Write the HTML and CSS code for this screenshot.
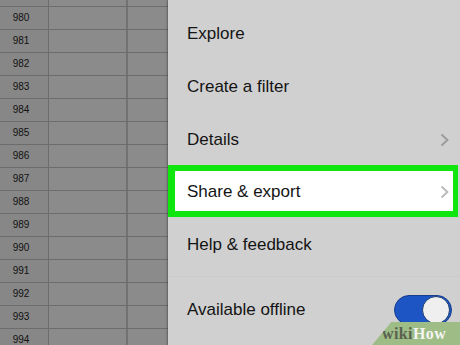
FILE: index.html
```html
<!DOCTYPE html>
<html lang="en">
<head>
  <meta charset="UTF-8" />
  <meta name="viewport" content="width=device-width, initial-scale=1.0"/>
  <title>Sheet menu</title>
  <link rel="stylesheet" href="styles.css">
</head>
<body>
  <div class="screen">
    <div class="sheet">
      <div class="row stub"><div class="num"></div><div class="cell"></div><div class="cell last"></div></div>
      <div class="row"><div class="num">980</div><div class="cell"></div><div class="cell last"></div></div>
      <div class="row"><div class="num">981</div><div class="cell"></div><div class="cell last"></div></div>
      <div class="row"><div class="num">982</div><div class="cell"></div><div class="cell last"></div></div>
      <div class="row"><div class="num">983</div><div class="cell"></div><div class="cell last"></div></div>
      <div class="row"><div class="num">984</div><div class="cell"></div><div class="cell last"></div></div>
      <div class="row"><div class="num">985</div><div class="cell"></div><div class="cell last"></div></div>
      <div class="row"><div class="num">986</div><div class="cell"></div><div class="cell last"></div></div>
      <div class="row"><div class="num">987</div><div class="cell"></div><div class="cell last"></div></div>
      <div class="row"><div class="num">988</div><div class="cell"></div><div class="cell last"></div></div>
      <div class="row"><div class="num">989</div><div class="cell"></div><div class="cell last"></div></div>
      <div class="row"><div class="num">990</div><div class="cell"></div><div class="cell last"></div></div>
      <div class="row"><div class="num">991</div><div class="cell"></div><div class="cell last"></div></div>
      <div class="row"><div class="num">992</div><div class="cell"></div><div class="cell last"></div></div>
      <div class="row"><div class="num">993</div><div class="cell"></div><div class="cell last"></div></div>
      <div class="row"><div class="num">994</div><div class="cell"></div><div class="cell last"></div></div>
    </div>

    <div class="menu">
      <div class="item">Explore</div>
      <div class="item">Create a filter</div>
      <div class="item">
        <span>Details</span>
        <svg class="chevron" width="9" height="14" viewBox="0 0 9 14"><polyline points="1.5,1.5 7.5,7 1.5,12.5" fill="none" stroke="#9a9a9a" stroke-width="1.8"/></svg>
      </div>
      <div class="item highlight">
        <span>Share &amp; export</span>
        <svg class="chevron" width="9" height="14" viewBox="0 0 9 14"><polyline points="1.5,1.5 7.5,7 1.5,12.5" fill="none" stroke="#b8b8b8" stroke-width="1.8"/></svg>
      </div>
      <div class="item">Help &amp; feedback</div>
      <div class="item offline">
        <span>Available offline</span>
        <div class="toggle"><div class="knob"></div></div>
      </div>
    </div>

    <div class="watermark"><span class="wiki">wiki</span><span class="how">How</span></div>
  </div>
</body>
</html>
```

FILE: styles.css
```css
html, body {
  margin: 0;
  padding: 0;
}

body {
  width: 460px;
  height: 345px;
  overflow: hidden;
  font-family: "Liberation Sans", Arial, sans-serif;
}

.screen {
  position: relative;
  display: flex;
  width: 460px;
  height: 345px;
  overflow: hidden;
}

/* spreadsheet behind the menu */
.sheet {
  width: 168px;
  flex-shrink: 0;
  background: #8b8b8b;
}

.row {
  display: grid;
  grid-template-columns: 49px 79px 40px;
  height: 23px;
  box-sizing: border-box;
  border-bottom: 1px solid #6c6c6c;
}

.row.stub {
  height: 7px;
}

.num {
  background: #878787;
  border-right: 1px solid #6c6c6c;
  color: #111;
  font-size: 10px;
  line-height: 22px;
  text-align: center;
  padding-right: 6px;
}

.cell {
  border-right: 2px solid #727272;
}

.cell.last {
  border-right: 1px solid #808080;
}

/* menu panel */
.menu {
  flex: 1;
  background: #d0d0d0;
  padding-top: 7px;
  box-shadow: -1px 0 2px rgba(0, 0, 0, 0.25);
}

.item {
  display: flex;
  align-items: center;
  justify-content: space-between;
  height: 53px;
  padding: 0 11px 0 19px;
  font-size: 17px;
  color: #141414;
}

.chevron {
  display: block;
}

.item.highlight {
  height: 52px;
  box-sizing: border-box;
  margin-top: -1px;
  margin-bottom: 1px;
  margin-right: 2px;
  background: #fff;
  border: 6px solid #0ee60e;
  border-left-width: 7px;
  border-right-width: 5px;
  padding: 2px 4px 0 12px;
}

.item.offline {
  margin-top: 5px;
  padding-top: 7px;
  height: 60px;
  box-sizing: border-box;
  border-top: 1px solid #cbcbcb;
  padding-right: 8px;
}

.toggle {
  width: 58px;
  height: 30px;
  box-sizing: border-box;
  border-radius: 15px;
  background: #1d55c4;
  border: 1px solid #173f8c;
  display: flex;
  justify-content: flex-end;
  align-items: center;
  padding-right: 1px;
}

.knob {
  width: 26px;
  height: 26px;
  border-radius: 50%;
  background: #efefef;
  border: 1px solid #1a3a70;
}

/* watermark overlay */
.watermark {
  position: absolute;
  right: 0;
  bottom: 0;
  width: 88px;
  height: 23px;
  background: #9ebc86;
  clip-path: polygon(22% 0, 100% 0, 100% 100%, 0 100%);
  font-family: "Liberation Serif", "DejaVu Serif", serif;
  font-weight: bold;
  font-size: 16px;
  line-height: 23px;
  padding-left: 10px;
  box-sizing: border-box;
  letter-spacing: 0.4px;
}

.wiki {
  color: #5a6150;
}

.how {
  color: #f4f4f0;
}
```
